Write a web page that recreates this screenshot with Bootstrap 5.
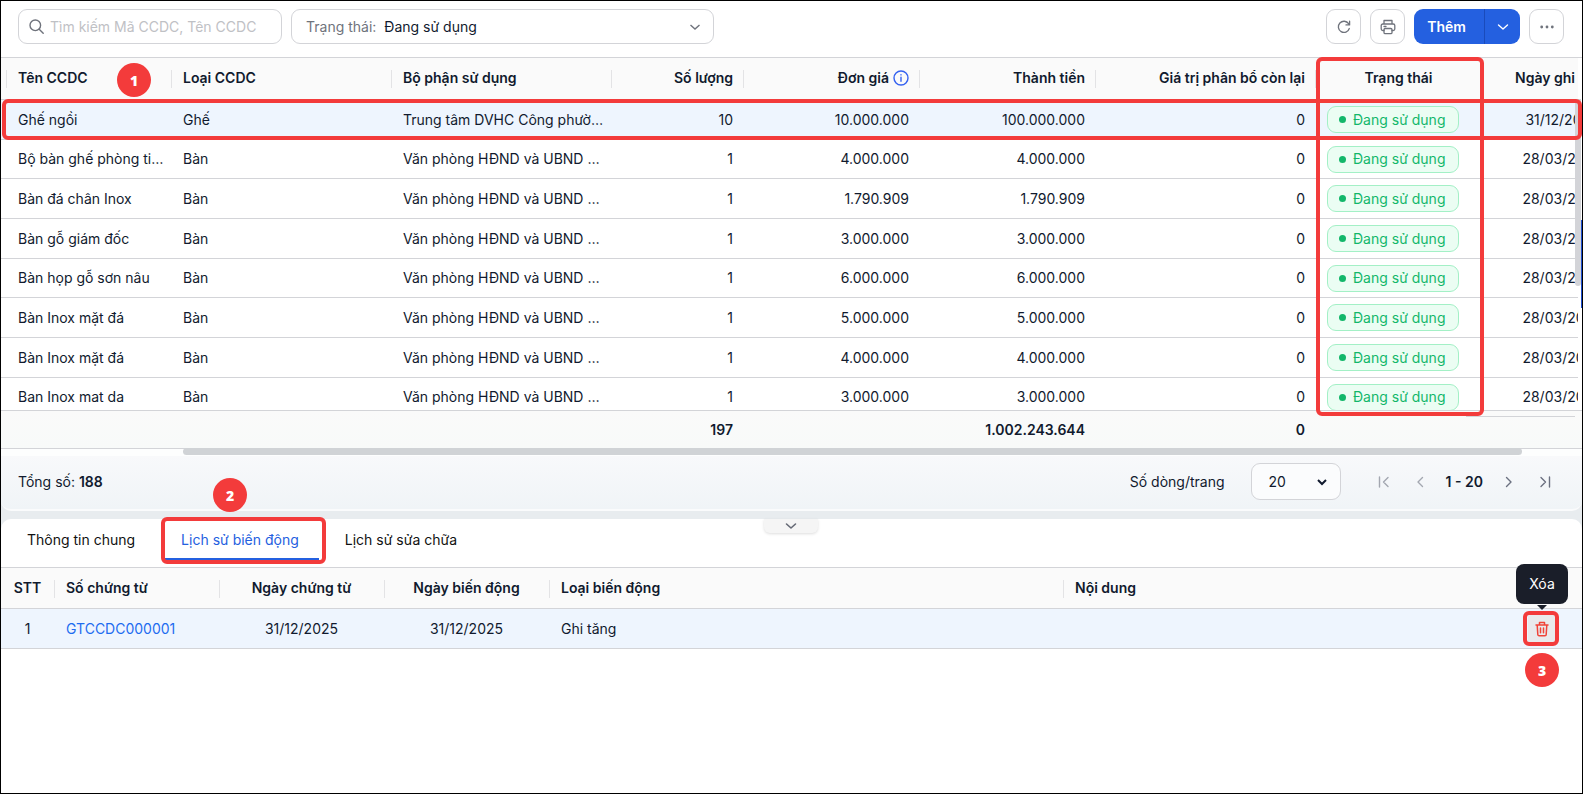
<!DOCTYPE html>
<html lang="vi">
<head>
<meta charset="utf-8">
<meta name="viewport" content="width=device-width, initial-scale=1">
<title>Công cụ dụng cụ</title>
<link href="https://cdn.jsdelivr.net/npm/bootstrap@5.3.0/dist/css/bootstrap.min.css" rel="stylesheet">
<style>
  :root { --ink:#111a2e; --line:#d3d4d8; --blue:#2460e0; --red:#f33b3b; --muted:#6f737c; }
  body { font-family:Inter,"Noto Sans",sans-serif; font-size:14px; line-height:20px; color:var(--ink); background:#e8ecef; }
  .app-frame { min-height:100vh; border:1px solid #000; overflow:hidden; }
  svg { display:block; fill:none; stroke:currentColor; stroke-linecap:round; stroke-linejoin:round; }

  .toolbar { padding:8px 18px 13px 17px; gap:9px; }
  .tool-set { gap:9px; }
  .field { height:35px; border:1px solid var(--line); border-radius:9px; background:#fff; color:var(--muted); }
  .search-field { width:264px; padding:0 8px 0 10px; gap:6px; }
  .filter-field { width:423px; padding-left:14px; }
  .plain-input { border:0; padding:0; background:transparent; outline:0; font-size:14px; color:var(--ink); min-width:0; }
  .plain-input::placeholder { color:#bfc1c5; opacity:1; }
  .plain-select { border:0; appearance:none; outline:0; height:33px; padding:0 34px 0 0; color:var(--ink); background:url("data:image/svg+xml,%3Csvg xmlns='http://www.w3.org/2000/svg' viewBox='0 0 12 8' fill='none' stroke='%236f737c' stroke-width='1.4'%3E%3Cpath d='M1.5 2 6 6l4.500-4'/%3E%3C/svg%3E") no-repeat right 12px center/12px 8px; }
  .tool-btn { width:35px; height:35px; padding:0; border:1px solid var(--line); border-radius:9px; background:#fff; color:var(--muted); }
  .add-group .btn { height:35px; padding:0; background:var(--blue); border:0; color:#fff; font-size:14px; font-weight:600; border-radius:9px; }
  .add-group .add-main { width:71px; padding-right:6px; border-radius:9px 0 0 9px; }
  .add-group .add-more { width:36px; border-left:1px solid #1a4bbb; border-radius:0 9px 9px 0; }

  .grid-wrap { border-top:1px solid var(--line); }
  .grid-view { height:352px; margin-right:4px; overflow:hidden; }
  .data-grid { table-layout:fixed; border-collapse:separate; border-spacing:0; }
  .data-grid th, .data-grid td { padding:0 4px 0 12px; border-bottom:1px solid var(--line); overflow:hidden; white-space:nowrap; text-overflow:ellipsis; vertical-align:middle; }
  .data-grid .num { padding-right:10px; text-align:right; }
  .data-grid .mid { padding-left:11px; padding-right:11px; text-align:center; }
  .data-grid th { height:41px; background:#fafafa; font-weight:600; position:relative; }
  .asset-grid th { height:42px; padding-bottom:2px; }
  .data-grid th::before { content:""; position:absolute; left:0; top:12px; height:18px; border-left:1px solid #e3e3e5; }
  .data-grid th.no-rule::before { display:none; }
  .data-grid td { height:40px; background:#fff; }
  .data-grid tr:nth-child(3n+2) td { height:39px; }
  .data-grid tr.picked td { background:#eef5fe; }
  .asset-grid { width:1641px; }
  .data-grid .edge { padding-left:17px; }
  .data-grid .edge::before { left:5px; }
  .data-grid .no-clip { text-overflow:clip; }
  .info { color:#3461f0; }
  .state { display:inline-flex; align-items:center; gap:7px; height:27px; width:132px; padding-left:11px; border:1px solid #a3f0c6; border-radius:9px; background:#ebfdf3; color:#12b76a; }
  .state::before { content:""; width:7px; height:7px; border-radius:50%; background:#12b76a; }
  .sum-grid { width:1641px; table-layout:fixed; border-collapse:separate; border-spacing:0; }
  .sum-grid td { height:37px; padding:0 10px; font-weight:600; text-align:right; }
  .sum-row { overflow:hidden; background:linear-gradient(#fafafa,#f8faf9); border-top:1px solid var(--line); border-bottom:1px solid var(--line); }
  .sum-tail { position:absolute; right:7px; top:358px; width:109px; border-top:1px solid var(--line); }
  .h-scroll { height:7px; background:#fdfefe; }
  .h-thumb { height:7px; margin:-1px 60px 0 182px; border-radius:4px; background:#d0d3d6; position:relative; }
  .v-thumb { position:absolute; right:1px; top:41px; width:6px; height:187px; border-radius:0 0 4px 4px; background:#d3d4d8; }
  .side-tab { position:absolute; right:0; top:162px; width:1px; height:88px; background:#1d4fd0; }

  .pager { height:55px; padding:0 19px 2px 17px; border-bottom:2px solid #fafbfc; border-radius:0 0 10px 10px; background:linear-gradient(#f8f9fb,#f0f4f7); }
  .page-size { width:90px; height:37px; margin:0 25px 0 26px; padding:0 0 0 17px; font-size:14px; color:var(--ink); border:1px solid var(--line); border-radius:9px; appearance:none; background:#fbfcfd url("data:image/svg+xml,%3Csvg xmlns='http://www.w3.org/2000/svg' viewBox='0 0 12 8' fill='none' stroke='%23111a2e' stroke-width='2'%3E%3Cpath d='M2 2l4 4 4-4'/%3E%3C/svg%3E") no-repeat right 12px center/12px 8px; }
  .page-btn { width:36px; height:36px; padding:0; border:0; color:#6b7080; display:flex; align-items:center; justify-content:center; }
  .page-btn:disabled { color:#a3a7b0; opacity:1; border:0; }

  .detail { margin-top:8px; background:#fff; border-radius:10px 10px 0 0; flex:1; }
  .fold-btn { position:absolute; top:0; left:50%; width:54px; height:14px; margin-left:-28px; padding:0; border:0; border-radius:0 0 6px 6px; background:#f5f5f5; box-shadow:0 1px 3px #0002; color:#656975; display:flex; align-items:center; justify-content:center; }
  .tab-row { padding:0 10px; height:49px; gap:10px; border-bottom:1px solid var(--line); }
  .tab-btn { height:41px; padding:2px 20px 0 16px; border:0; border-bottom:2px solid transparent; border-radius:0; background:none; color:#111; font-size:14px; position:relative; }
  .tab-btn.active { color:var(--blue); border-bottom-color:var(--blue); }
  .move-grid { width:100%; }
  .move-grid td a { color:#1d6cf0; text-decoration:none; }
  .data-grid .act { overflow:visible; position:relative; padding:0; text-align:center; }
  .del-btn { width:28px; height:28px; padding:0; border:0; border-radius:2px; background:#e9eaec; color:#f04438; display:inline-flex; align-items:center; justify-content:center; }
  .tip { position:absolute; left:14px; top:-45px; width:52px; height:40px; line-height:40px; border-radius:8px; background:#1a1e29; color:#fff; text-align:center; }
  .tip::after { content:""; position:absolute; left:21px; top:41px; border:5px solid transparent; border-top-color:#1a1e29; border-bottom:0; }

  .mark-box { position:absolute; border:4px solid var(--red); border-radius:6px; pointer-events:none; }
  .mark-row { left:1px; right:0; top:41px; height:41px; }
  .mark-col { left:1315px; top:-1px; width:168px; height:359px; }
  .mark-tab { left:-4px; top:-2px; width:165px; height:47px; }
  .mark-del { left:21px; top:2px; width:36px; height:35px; }
  .step-dot { position:absolute; width:34px; height:34px; border-radius:50%; background:var(--red); color:#fff; font:800 14px/36px "Open Sans",sans-serif; text-align:center; }
  .dot-1 { left:116px; top:5px; }
  .dot-2 { left:48px; top:-41px; }
  .dot-3 { left:23px; top:44px; }
</style>
</head>
<body>
<div class="app-frame d-flex flex-column">

  <header class="toolbar bg-white d-flex align-items-center">
    <label class="field search-field d-flex align-items-center">
      <svg width="15" height="15" viewBox="0 0 15 15" stroke-width="1.400"><circle cx="6.300" cy="6.300" r="5.300"/><path d="m10.200 10.200 4 4"/></svg>
      <input class="plain-input flex-fill" type="search" aria-label="Tìm kiếm" placeholder="Tìm kiếm Mã CCDC, Tên CCDC">
    </label>
    <div class="field filter-field d-flex align-items-center gap-2">
      <label for="filter">Trạng thái:</label>
      <select id="filter" class="plain-select flex-fill"><option>Đang sử dụng</option></select>
    </div>
    <div class="tool-set ms-auto d-flex">
      <button class="btn tool-btn d-flex align-items-center justify-content-center" aria-label="Tải lại"><svg width="14" height="14" viewBox="0 0 14 14" stroke-width="1.300"><path d="M12.300 8.500A5.600 5.600 0 1 1 11.600 3.700L12.500 4.800M12.600 1.200v3.700H9"/></svg></button>
      <button class="btn tool-btn d-flex align-items-center justify-content-center" aria-label="In"><svg width="16" height="16" viewBox="0 0 16 16" stroke-width="1.300"><path d="M4 5V1.500h8V5M4 11.500H2.800A1.600 1.600 0 0 1 1.200 10V6.600A1.600 1.600 0 0 1 2.800 5h10.400a1.600 1.600 0 0 1 1.600 1.600V10a1.600 1.600 0 0 1-1.600 1.500H12M6 7.500H4"/><rect x="4" y="9.500" width="8" height="5.200" rx="1.200"/></svg></button>
      <div class="btn-group add-group">
        <button class="btn add-main">Thêm</button>
        <button class="btn add-more d-flex align-items-center justify-content-center" aria-label="Thêm lựa chọn"><svg width="12" height="8" viewBox="0 0 12 8" stroke-width="1.400"><path d="m1.500 2 4.500 4 4.500-4"/></svg></button>
      </div>
      <button class="btn tool-btn d-flex align-items-center justify-content-center" aria-label="Khác"><svg width="14" height="4" viewBox="0 0 14 4" style="fill:currentColor;stroke:none"><circle cx="1.700" cy="2" r="1.400"/><circle cx="7" cy="2" r="1.400"/><circle cx="12.300" cy="2" r="1.400"/></svg></button>
    </div>
  </header>

  <section class="grid-wrap bg-white position-relative">
    <div class="grid-view">
      <table class="data-grid asset-grid">
        <colgroup><col style="width:170px"><col style="width:220px"><col style="width:220px"><col style="width:132px"><col style="width:176px"><col style="width:176px"><col style="width:220px"><col style="width:167px"><col style="width:160px"></colgroup>
        <thead><tr>
          <th class="edge">Tên CCDC</th><th>Loại CCDC</th><th>Bộ phận sử dụng</th><th class="num">Số lượng</th>
          <th class="num"><div class="d-flex align-items-center justify-content-end gap-1">Đơn giá <svg class="info" width="16" height="16" viewBox="0 0 16 16" stroke-width="1.400"><circle cx="8" cy="8" r="7"/><path d="M8 7.200v4M8 4.700v.2"/></svg></div></th>
          <th class="num">Thành tiền</th><th class="num">Giá trị phân bổ còn lại</th><th class="mid">Trạng thái</th><th class="mid no-clip">Ngày ghi tăng</th>
        </tr></thead>
        <tbody>
          <tr class="picked"><td class="edge">Ghế ngồi</td><td>Ghế</td><td>Trung tâm DVHC Công phường Tân An</td><td class="num">10</td><td class="num">10.000.000</td><td class="num">100.000.000</td><td class="num">0</td><td><span class="state">Đang sử dụng</span></td><td class="mid">31/12/2025</td></tr>
          <tr><td class="edge">Bộ bàn ghế phòng tiếp khách</td><td>Bàn</td><td>Văn phòng HĐND và UBND phường</td><td class="num">1</td><td class="num">4.000.000</td><td class="num">4.000.000</td><td class="num">0</td><td><span class="state">Đang sử dụng</span></td><td class="mid">28/03/2025</td></tr>
          <tr><td class="edge">Bàn đá chân Inox</td><td>Bàn</td><td>Văn phòng HĐND và UBND phường</td><td class="num">1</td><td class="num">1.790.909</td><td class="num">1.790.909</td><td class="num">0</td><td><span class="state">Đang sử dụng</span></td><td class="mid">28/03/2025</td></tr>
          <tr><td class="edge">Bàn gỗ giám đốc</td><td>Bàn</td><td>Văn phòng HĐND và UBND phường</td><td class="num">1</td><td class="num">3.000.000</td><td class="num">3.000.000</td><td class="num">0</td><td><span class="state">Đang sử dụng</span></td><td class="mid">28/03/2025</td></tr>
          <tr><td class="edge">Bàn họp gỗ sơn nâu</td><td>Bàn</td><td>Văn phòng HĐND và UBND phường</td><td class="num">1</td><td class="num">6.000.000</td><td class="num">6.000.000</td><td class="num">0</td><td><span class="state">Đang sử dụng</span></td><td class="mid">28/03/2025</td></tr>
          <tr><td class="edge">Bàn Inox mặt đá</td><td>Bàn</td><td>Văn phòng HĐND và UBND phường</td><td class="num">1</td><td class="num">5.000.000</td><td class="num">5.000.000</td><td class="num">0</td><td><span class="state">Đang sử dụng</span></td><td class="mid">28/03/2025</td></tr>
          <tr><td class="edge">Bàn Inox mặt đá</td><td>Bàn</td><td>Văn phòng HĐND và UBND phường</td><td class="num">1</td><td class="num">4.000.000</td><td class="num">4.000.000</td><td class="num">0</td><td><span class="state">Đang sử dụng</span></td><td class="mid">28/03/2025</td></tr>
          <tr><td class="edge">Ban Inox mat da</td><td>Bàn</td><td>Văn phòng HĐND và UBND phường</td><td class="num">1</td><td class="num">3.000.000</td><td class="num">3.000.000</td><td class="num">0</td><td><span class="state">Đang sử dụng</span></td><td class="mid">28/03/2025</td></tr>
        </tbody>
      </table>
    </div>
    <div class="sum-row">
      <table class="sum-grid">
        <colgroup><col style="width:170px"><col style="width:220px"><col style="width:220px"><col style="width:132px"><col style="width:176px"><col style="width:176px"><col style="width:220px"><col style="width:167px"><col style="width:160px"></colgroup>
        <tbody><tr><td></td><td></td><td></td><td>197</td><td></td><td>1.002.243.644</td><td>0</td><td></td><td></td></tr></tbody>
      </table>
    </div>
    <div class="sum-tail"></div>
    <div class="v-thumb"></div>
    <div class="side-tab"></div>
    <div class="mark-box mark-row"></div>
    <div class="mark-box mark-col"></div>
    <div class="step-dot dot-1">1</div>
  </section>
  <div class="h-scroll"><div class="h-thumb"></div></div>

  <div class="pager d-flex align-items-center">
    <div>Tổng số: <span class="fw-semibold">188</span></div>
    <label class="ms-auto" for="size">Số dòng/trang</label>
    <select id="size" class="page-size"><option>20</option></select>
    <button class="btn page-btn" disabled aria-label="Trang đầu"><svg width="12" height="12" viewBox="0 0 12 12" stroke-width="1.400"><path d="M1.500 1v10M10 1.500 5.500 6l4.500 4.500"/></svg></button>
    <button class="btn page-btn" disabled aria-label="Trang trước"><svg width="12" height="12" viewBox="0 0 12 12" stroke-width="1.400"><path d="M8.500 1.500 4 6l4.500 4.500"/></svg></button>
    <span class="fw-semibold mx-2">1 - 20</span>
    <button class="btn page-btn" aria-label="Trang sau"><svg width="12" height="12" viewBox="0 0 12 12" stroke-width="1.400"><path d="M3.500 1.500 8 6l-4.500 4.500"/></svg></button>
    <button class="btn page-btn" aria-label="Trang cuối"><svg width="12" height="12" viewBox="0 0 12 12" stroke-width="1.400"><path d="M10.500 1v10M2 1.500 6.500 6 2 10.500"/></svg></button>
  </div>

  <section class="detail position-relative">
    <button class="fold-btn" aria-label="Thu gọn"><svg width="12" height="8" viewBox="0 0 12 8" stroke-width="1.600"><path d="m1.500 2 4.500 4 4.500-4"/></svg></button>
    <div class="tab-row d-flex">
      <button class="tab-btn">Thông tin chung</button>
      <button class="tab-btn active">Lịch sử biến động<span class="mark-box mark-tab"></span><span class="step-dot dot-2">2</span></button>
      <button class="tab-btn">Lịch sử sửa chữa</button>
    </div>
    <table class="data-grid move-grid">
      <colgroup><col style="width:53px"><col style="width:165px"><col style="width:165px"><col style="width:165px"><col style="width:514px"><col><col style="width:80px"></colgroup>
      <thead><tr><th class="mid no-rule">STT</th><th>Số chứng từ</th><th class="mid">Ngày chứng từ</th><th class="mid">Ngày biến động</th><th>Loại biến động</th><th>Nội dung</th><th class="no-rule"></th></tr></thead>
      <tbody><tr class="picked"><td class="mid">1</td><td><a href="#">GTCCDC000001</a></td><td class="mid">31/12/2025</td><td class="mid">31/12/2025</td><td>Ghi tăng</td><td></td>
        <td class="act"><button class="del-btn" aria-label="Xóa"><svg width="14" height="16" viewBox="0 0 14 16" stroke-width="1.500"><path d="M1 4h12M4.500 4V1.500h5V4M2.200 4l.6 9.400A1.300 1.300 0 0 0 4.100 14.700h5.800a1.300 1.300 0 0 0 1.300-1.300L11.800 4M5.500 7v4.700M8.500 7v4.700"/></svg></button><span class="tip">Xóa</span><span class="mark-box mark-del"></span><span class="step-dot dot-3">3</span></td></tr></tbody>
    </table>
  </section>
</div>
<script src="https://cdn.jsdelivr.net/npm/bootstrap@5.3.0/dist/js/bootstrap.bundle.min.js"></script>
</body>
</html>
